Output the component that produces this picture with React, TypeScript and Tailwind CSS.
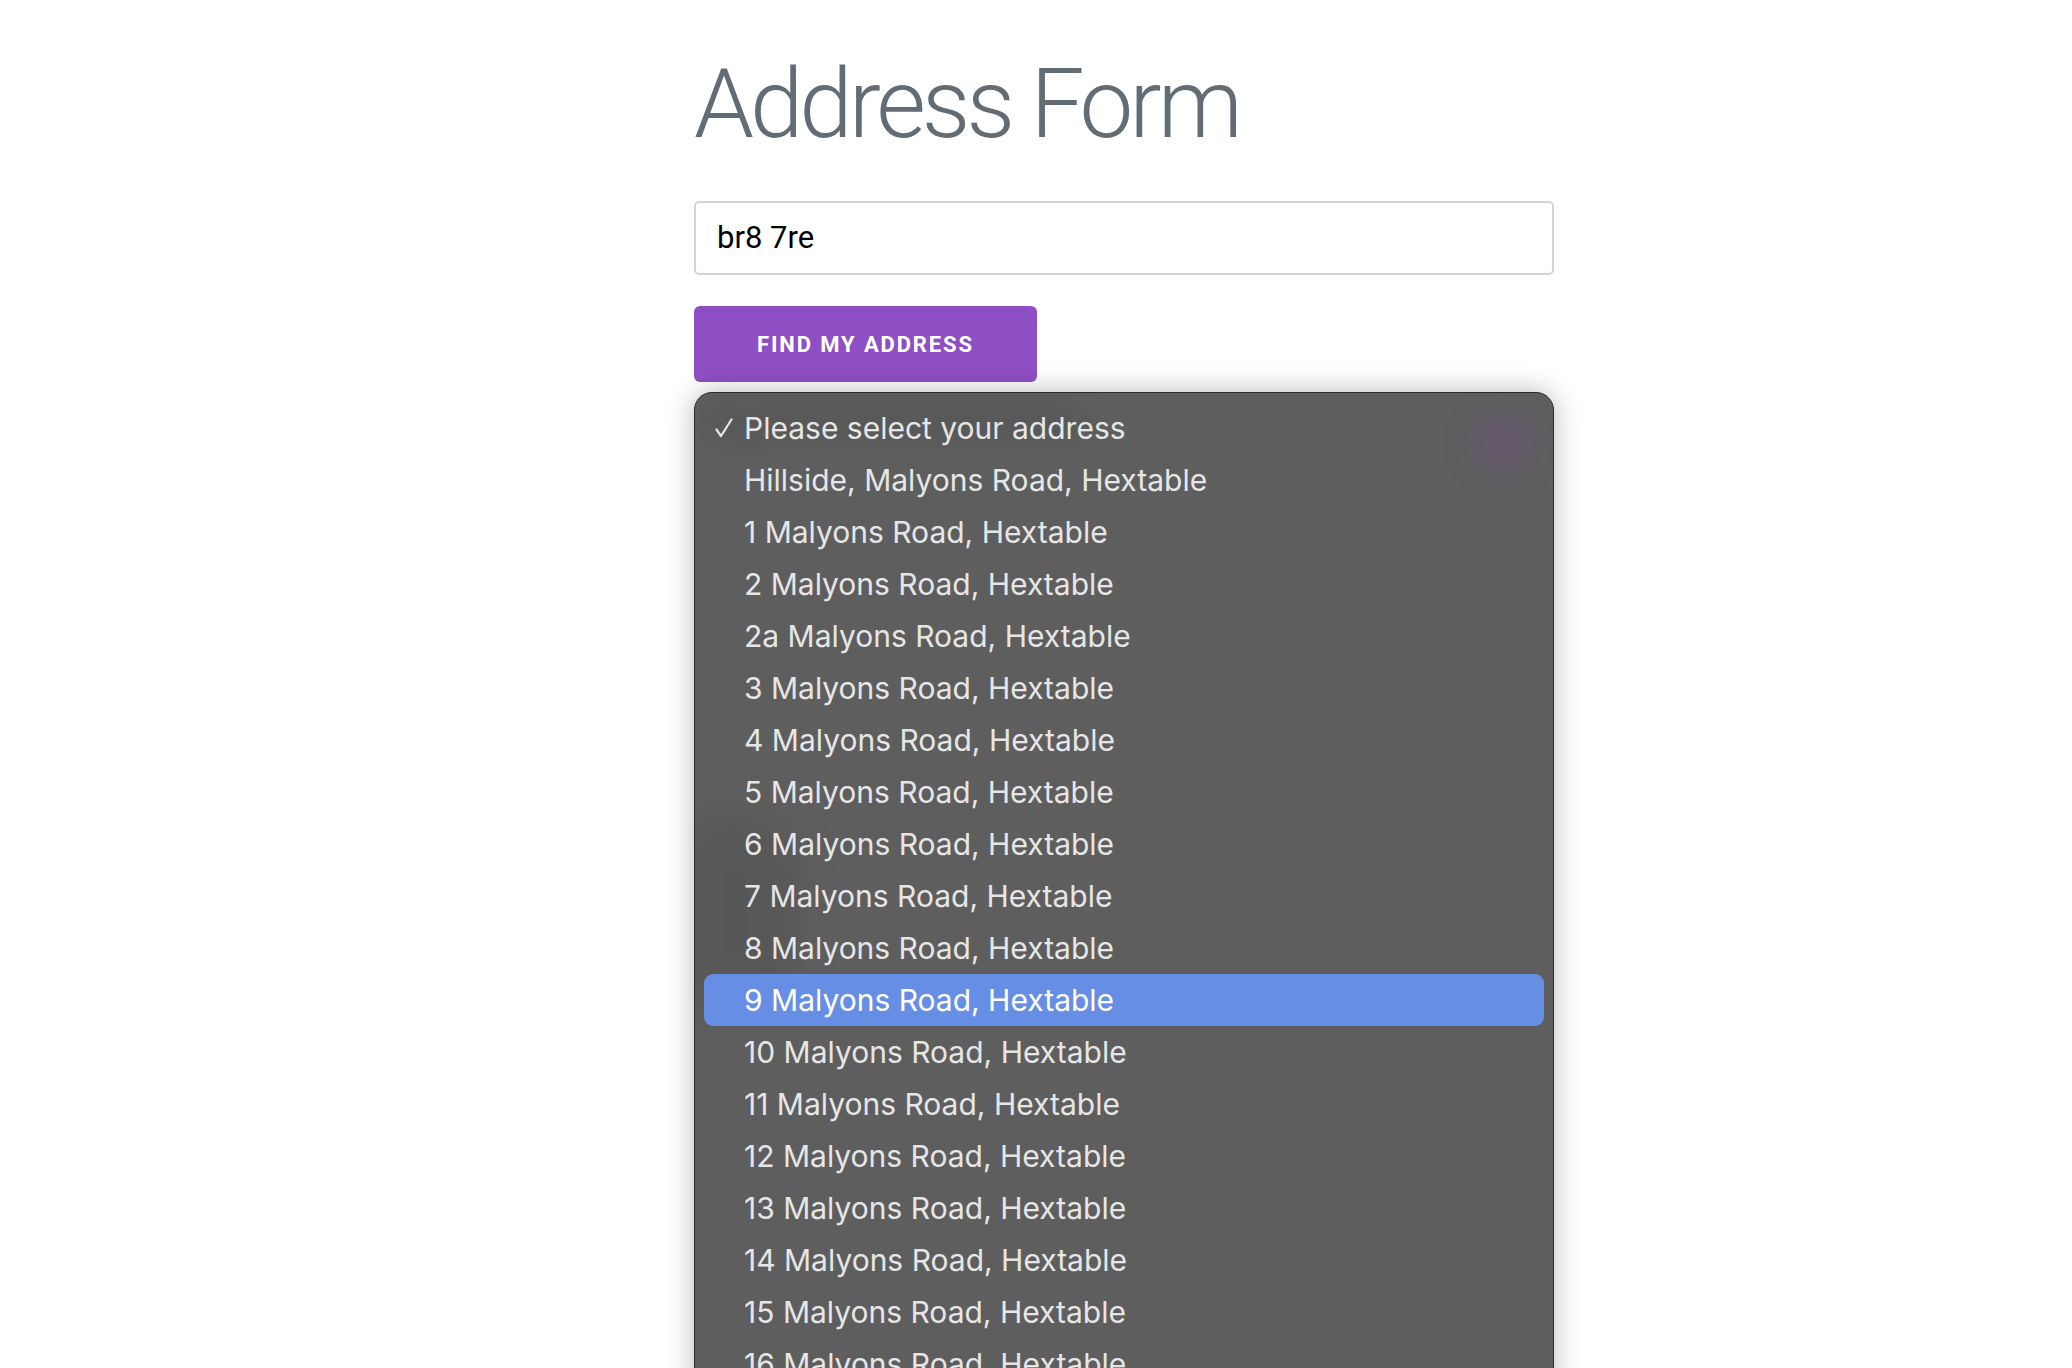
import React from "react";

const addresses = [
  "Hillside, Malyons Road, Hextable",
  "1 Malyons Road, Hextable",
  "2 Malyons Road, Hextable",
  "2a Malyons Road, Hextable",
  "3 Malyons Road, Hextable",
  "4 Malyons Road, Hextable",
  "5 Malyons Road, Hextable",
  "6 Malyons Road, Hextable",
  "7 Malyons Road, Hextable",
  "8 Malyons Road, Hextable",
  "9 Malyons Road, Hextable",
  "10 Malyons Road, Hextable",
  "11 Malyons Road, Hextable",
  "12 Malyons Road, Hextable",
  "13 Malyons Road, Hextable",
  "14 Malyons Road, Hextable",
  "15 Malyons Road, Hextable",
  "16 Malyons Road, Hextable",
  "17 Malyons Road, Hextable",
];

export default function App() {
  const selected = "9 Malyons Road, Hextable";

  return (
    <main className="h-screen overflow-hidden bg-white font-['Roboto',sans-serif]">
      <div className="ml-[694px] w-[860px]">
        <h1 className="mt-[56px] text-[96px] leading-none font-light text-[#616c75] tracking-[-4px]">
          Address Form
        </h1>

        <div className="mt-[49px] h-[74px] rounded-[5px] border-2 border-[#d4d4d4] flex items-center px-[21px]">
          <span className="text-[31px] text-black">br8 7re</span>
        </div>

        <button className="mt-[31px] h-[76px] w-[343px] rounded-[6px] bg-[#8f4fc4] text-white text-[22px] font-bold tracking-[0.085em] uppercase">
          Find my address
        </button>

        {/* open native select menu */}
        <div className="relative mt-[10px] h-[1200px] rounded-[18px] bg-[#5e5e5e] border border-[#2a2a2a] shadow-[0_0_28px_rgba(0,0,0,0.28)] overflow-hidden px-[9px] pt-[9px] font-['Inter',sans-serif]">
          <div className="absolute right-[20px] top-[20px] w-[60px] h-[60px] rounded-full bg-[#6a5578] blur-[14px] opacity-60" />
          <div className="absolute left-[10px] top-[10px] w-[380px] h-[40px] rounded-full bg-[#555] blur-[12px] opacity-60" />
          <div className="absolute left-[-20px] top-[420px] w-[120px] h-[200px] rounded-full bg-[#545454] blur-[20px] opacity-70" />

          <div className="relative">
            <div className="h-[52px] flex items-center text-[30px] text-[#e6e6e6]">
              <span className="w-[40px] pl-[11px] flex items-center">
                <svg width="18" height="20" viewBox="0 0 18 20" fill="none">
                  <path d="M1.5 11.5 L6 18 L16.5 1.5" stroke="#e6e6e6" strokeWidth="2.2" strokeLinecap="round" strokeLinejoin="round" />
                </svg>
              </span>
              <span>Please select your address</span>
            </div>
            {addresses.map((a) => (
              <div
                key={a}
                className={
                  a === selected
                    ? "h-[52px] flex items-center rounded-[9px] bg-[#668ee5] text-white text-[30px] pl-[40px]"
                    : "h-[52px] flex items-center text-[#e6e6e6] text-[30px] pl-[40px]"
                }
              >
                {a}
              </div>
            ))}
          </div>
        </div>
      </div>
    </main>
  );
}
